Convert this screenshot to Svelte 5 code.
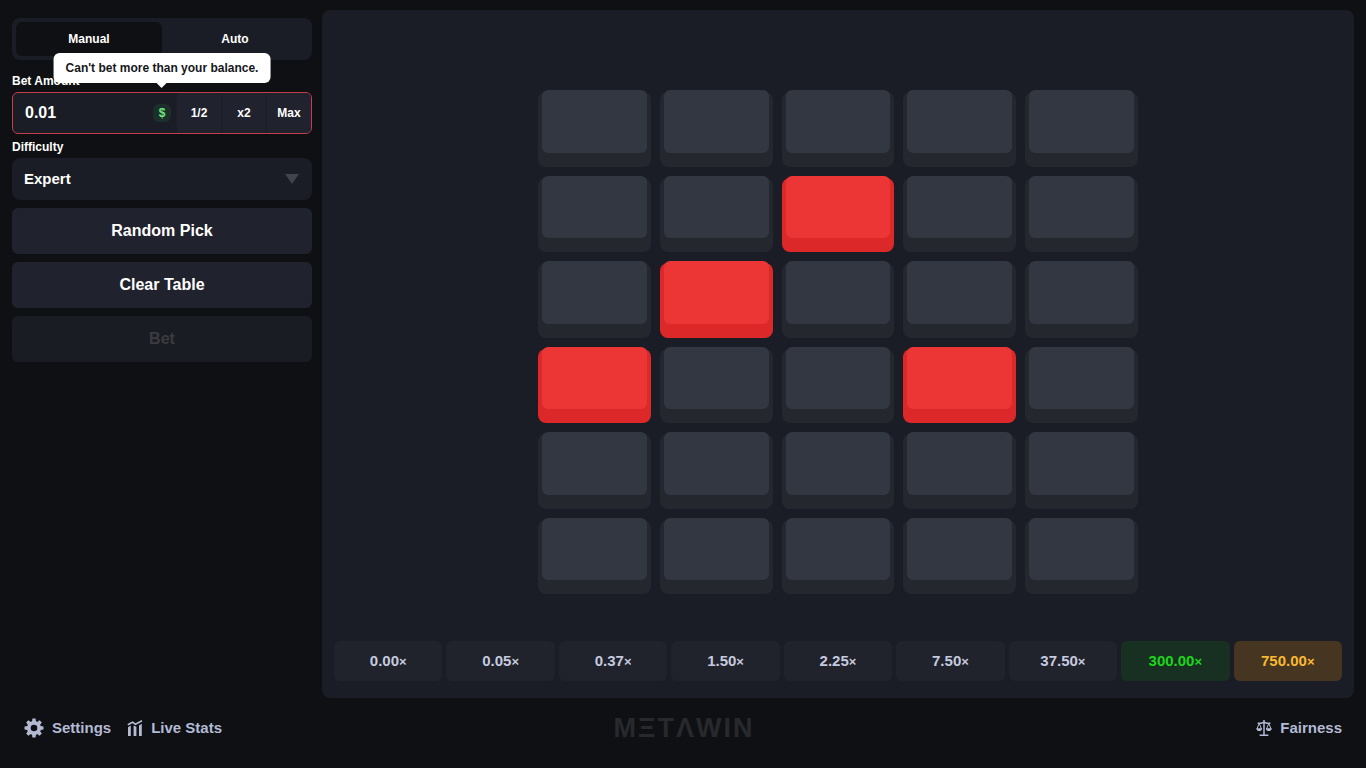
<script lang="ts">
  const COLS = 5;
  const ROWS = 6;

  let mode = $state("manual");
  let amount = $state("0.01");
  let difficulty = $state("expert");
  let picked = $state([7, 11, 15, 18]);

  const tiles = Array.from({ length: COLS * ROWS }, (_, i) => i);

  const payouts = [
    { value: "0.00" },
    { value: "0.05" },
    { value: "0.37" },
    { value: "1.50" },
    { value: "2.25" },
    { value: "7.50" },
    { value: "37.50" },
    { value: "300.00", tier: "high" },
    { value: "750.00", tier: "top" },
  ];

  const gearTeeth = [0, 45, 90, 135, 180, 225, 270, 315];

  function toggle(i: number) {
    picked = picked.includes(i) ? picked.filter((p) => p !== i) : [...picked, i];
  }

  function scaleBet(factor: number) {
    amount = (Number(amount) * factor).toFixed(2);
  }

  function randomPick() {
    picked = [...tiles].sort(() => Math.random() - 0.5).slice(0, 4);
  }
</script>

<div class="app">
  <div class="content">
    <aside class="sidebar">
      <div class="tabs">
        <button class:active={mode === "manual"} onclick={() => (mode = "manual")}>Manual</button>
        <button class:active={mode === "auto"} onclick={() => (mode = "auto")}>Auto</button>
      </div>

      <div class="field">
        <label for="amount">Bet Amount</label>
        <div class="bet invalid">
          <input id="amount" type="text" bind:value={amount} />
          <span class="currency">$</span>
          <button onclick={() => scaleBet(0.5)}>1/2</button>
          <button onclick={() => scaleBet(2)}>x2</button>
          <button>Max</button>
          <div class="tooltip" role="alert">Can't bet more than your balance.</div>
        </div>
      </div>

      <div class="field">
        <label for="difficulty">Difficulty</label>
        <div class="select">
          <select id="difficulty" bind:value={difficulty}>
            <option value="easy">Easy</option>
            <option value="medium">Medium</option>
            <option value="expert">Expert</option>
          </select>
          <svg width="14" height="10" viewBox="0 0 14 10" aria-hidden="true">
            <path d="M0 0h14L7 10z" fill="#41434e" />
          </svg>
        </div>
      </div>

      <div class="actions">
        <button onclick={randomPick}>Random Pick</button>
        <button onclick={() => (picked = [])}>Clear Table</button>
        <button disabled>Bet</button>
      </div>
    </aside>

    <main class="game">
      <div class="board">
        {#each tiles as i}
          <button
            class="tile"
            class:picked={picked.includes(i)}
            aria-label="Tile {i + 1}"
            onclick={() => toggle(i)}
          >
            <span class="cap"></span>
          </button>
        {/each}
      </div>

      <div class="payouts">
        {#each payouts as payout}
          <div class="payout {payout.tier ?? ''}">{payout.value}<span class="times">×</span></div>
        {/each}
      </div>
    </main>
  </div>

  <footer>
    <nav>
      <a href="#settings">
        <svg width="20" height="20" viewBox="0 0 20 20" aria-hidden="true">
          <circle cx="10" cy="10" r="5.2" fill="none" stroke="currentColor" stroke-width="3.8" />
          {#each gearTeeth as angle}
            <path d="M8 4L8.4.5h3.2L12 4z" fill="currentColor" transform="rotate({angle} 10 10)" />
          {/each}
        </svg>
        Settings
      </a>
      <a href="#stats">
        <svg width="16" height="16" viewBox="0 0 16 16" fill="currentColor" aria-hidden="true">
          <path d="M1 7.2l2.8-1.6V16H1zM6.6 5.4l2.8 1.4V16H6.6zM12 5.6l2.8-1.8V16H12z" />
          <path
            d="M.8 4.8L5.6 2.2l2.8 2L15 .8"
            fill="none"
            stroke="currentColor"
            stroke-width="1.6"
          />
        </svg>
        Live Stats
      </a>
    </nav>

    <div class="logo" role="img" aria-label="METAWIN">
      <span>M</span><span>Ξ</span><span>T</span><span>Λ</span><span>W</span><span>I</span><span>N</span>
    </div>

    <nav class="end">
      <a href="#fairness">
        <svg
          width="16"
          height="16"
          viewBox="0 0 16 16"
          fill="none"
          stroke="currentColor"
          stroke-width="1.5"
          aria-hidden="true"
        >
          <path d="M8 0v15M3.6 15.2h8.8M1.6 3.2h3.6C6.6 3.2 6.8 2.2 8 2.2s1.4 1 2.8 1h3.6" />
          <path d="M3.2 3.4L.9 9h4.6zM12.8 3.4L10.5 9h4.6z" stroke-width="1" />
          <path d="M.3 8.4h5.8C5.8 11.8.6 11.8.3 8.4zM9.9 8.4h5.8c-.3 3.4-5.5 3.4-5.8 0z" fill="currentColor" stroke="none" />
        </svg>
        Fairness
      </a>
    </nav>
  </footer>
</div>

<style>
  :global(body) {
    margin: 0;
    background: #0f1013;
  }

  .app {
    display: flex;
    flex-direction: column;
    box-sizing: border-box;
    min-height: 100vh;
    padding: 10px 12px 0;
    color: #fff;
    font-family: "Liberation Sans", Arial, sans-serif;
    font-weight: 700;
  }

  button,
  input,
  select {
    margin: 0;
    padding: 0;
    border: 0;
    background: none;
    color: inherit;
    font: inherit;
  }

  button {
    cursor: pointer;
  }

  .content {
    display: grid;
    flex: 1;
    grid-template-columns: 300px 1fr;
    gap: 10px;
  }

  .sidebar {
    padding-top: 8px;
  }

  .tabs {
    display: flex;
    box-sizing: border-box;
    height: 42px;
    margin-bottom: 8px;
    padding: 4px;
    border-radius: 8px;
    background: #1a1d25;
    font-size: 12px;
  }

  .tabs button {
    flex: 1;
    border-radius: 6px;
  }

  .tabs .active {
    background: #0f1013;
  }

  .field label {
    display: block;
    padding-top: 2px;
    font-size: 12px;
    line-height: 22px;
  }

  .bet {
    position: relative;
    display: flex;
    align-items: center;
    box-sizing: border-box;
    height: 42px;
    border: 1px solid #1a1d25;
    border-radius: 6px;
    background: #1a1d25;
  }

  .bet.invalid {
    border-color: #c53c4a;
  }

  .bet input {
    flex: 1;
    min-width: 0;
    padding-left: 12px;
    font-size: 16px;
    outline: none;
  }

  .currency {
    width: 18px;
    margin-right: 5px;
    border-radius: 6px;
    background: #1d2f2c;
    color: #6fe87c;
    font-size: 12px;
    line-height: 18px;
    text-align: center;
  }

  .bet button {
    box-sizing: border-box;
    width: 45px;
    height: 100%;
    border-left: 1px solid #1b1e26;
    background: #20222d;
    font-size: 12px;
  }

  .bet button:last-of-type {
    border-radius: 0 5px 5px 0;
  }

  .tooltip {
    position: absolute;
    bottom: 50px;
    left: 50%;
    padding: 0 12px;
    border-radius: 6px;
    background: #fff;
    color: #16171b;
    font-size: 12px;
    line-height: 30px;
    white-space: nowrap;
    transform: translateX(-50%);
  }

  .tooltip::after {
    content: "";
    position: absolute;
    top: 100%;
    left: 50%;
    border: 5px solid transparent;
    border-top-color: #fff;
    border-bottom: 0;
    transform: translateX(-50%);
  }

  .select {
    display: grid;
    align-items: center;
    height: 42px;
    border-radius: 8px;
    background: #1a1d25;
  }

  .select select,
  .select svg {
    grid-area: 1 / 1;
  }

  .select select {
    width: 100%;
    height: 42px;
    padding: 0 12px 2px;
    appearance: none;
    font-size: 15px;
  }

  .select svg {
    justify-self: end;
    margin-right: 13px;
    pointer-events: none;
  }

  .actions {
    display: flex;
    flex-direction: column;
    gap: 8px;
    margin-top: 8px;
  }

  .actions button {
    height: 46px;
    border-radius: 6px;
    background: #20222d;
    font-size: 16px;
  }

  .actions button:disabled {
    background: #191c22;
    color: #393b40;
    cursor: default;
  }

  .game {
    display: flex;
    flex-direction: column;
    box-sizing: border-box;
    padding: 80px 12px 17px;
    border-radius: 8px;
    background: #1a1d25;
  }

  .board {
    display: grid;
    flex: 1;
    grid-template-columns: repeat(5, 1fr);
    grid-auto-rows: 1fr;
    gap: 9px;
    width: 100%;
    max-width: 600px;
    margin: 0 auto 47px;
  }

  .tile {
    display: flex;
    min-height: 64px;
    margin-top: 2px;
    padding: 0 4px 14px;
    background: #25272f;
    border-radius: 8px;
  }

  /* the key cap rises slightly above its base */
  .cap {
    flex: 1;
    margin-top: -2px;
    border-radius: 6px;
    background: #323741;
  }

  .tile.picked {
    background: #dc2828;
  }

  .tile.picked .cap {
    background: #ec3636;
  }

  .payouts {
    display: grid;
    grid-template-columns: repeat(9, 1fr);
    gap: 4px;
  }

  .payout {
    border-radius: 6px;
    background: #20222c;
    color: #c5cade;
    font-size: 15px;
    line-height: 40px;
    text-align: center;
  }

  .times {
    font-size: 13px;
    line-height: 1;
  }

  .payout.high {
    background: #183021;
    color: #1bd61b;
  }

  .payout.top {
    background: #463520;
    color: #f9b931;
  }

  footer {
    display: grid;
    grid-template-columns: 1fr auto 1fr;
    align-items: center;
    height: 60px;
    padding: 0 12px 10px;
  }

  nav {
    display: flex;
    gap: 16px;
  }

  nav.end {
    justify-content: flex-end;
  }

  nav a {
    display: flex;
    align-items: center;
    gap: 8px;
    color: #b3bad3;
    font-size: 15px;
    line-height: 20px;
    text-decoration: none;
  }

  .logo {
    display: flex;
    gap: 2px;
    color: #27292d;
    font-size: 27px;
    line-height: 30px;
  }
</style>
